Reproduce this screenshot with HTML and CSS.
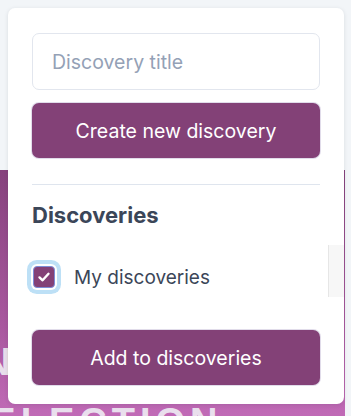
FILE: index.html
```html
<!DOCTYPE html>
<html lang="en">
<head>
    <meta charset="UTF-8">
    <meta name="viewport" content="width=device-width, initial-scale=1.0">
    <title>Discoveries</title>
    <link rel="stylesheet" href="styles.css">
</head>
<body>
    <div class="hero">
        <div class="hero-line first">DESIGN</div>
        <div class="hero-line second">SELECTION</div>
    </div>

    <div class="popover">
        <input type="text" class="title-input" placeholder="Discovery title">
        <button type="button" class="btn">Create new discovery</button>

        <hr class="divider">

        <h2 class="section-title">Discoveries</h2>

        <div class="list-wrap">
            <div class="list">
                <label class="check-row">
                    <span class="check-box">
                        <svg width="14" height="14" viewBox="0 0 14 14">
                            <path d="M2.5 7.4 L5.6 10.3 L11.5 3.8" fill="none" stroke="#fff" stroke-width="2.4" stroke-linecap="round" stroke-linejoin="round"/>
                        </svg>
                    </span>
                    <span class="check-label">My discoveries</span>
                </label>
            </div>
            <div class="scroll-track"></div>
        </div>

        <button type="button" class="btn add-btn">Add to discoveries</button>
    </div>
</body>
</html>
```

FILE: styles.css
```css
body {
    margin: 0;
    background: #f2f5f8;
    font-family: Inter, "Noto Sans", sans-serif;
    overflow: hidden;
}

.hero {
    margin-top: 170px;
    width: 345px;
    height: 260px;
    background: linear-gradient(180deg, #86427d 0%, #a9589f 60%, #c46dba 100%);
    overflow: hidden;
}

.hero-line {
    color: rgba(240, 240, 245, 0.9);
    font-family: "Liberation Sans", sans-serif;
    font-weight: bold;
    font-size: 38px;
    letter-spacing: 5px;
    line-height: 1;
    white-space: nowrap;
}

.hero-line.first {
    margin-top: 173px;
    margin-left: -160px;
}

.hero-line.second {
    margin-top: 22px;
    margin-left: -40px;
}

.popover {
    position: absolute;
    top: 8px;
    left: 8px;
    width: 336px;
    height: 396px;
    box-sizing: border-box;
    padding: 25px 24px 19px 24px;
    background: #fff;
    border-radius: 7px;
    box-shadow: 0 1px 4px rgba(30, 41, 59, 0.12);
    display: flex;
    flex-direction: column;
}

.title-input {
    height: 57px;
    box-sizing: border-box;
    border: 1px solid #e2e6ee;
    border-radius: 7px;
    padding: 0 19px;
    font-family: Inter, "Noto Sans", sans-serif;
    font-size: 19.5px;
    color: #334155;
    outline: none;
}

.title-input::placeholder {
    color: #94a1b6;
}

.btn {
    margin-top: 13px;
    height: 55px;
    border: none;
    border-radius: 7px;
    background: #834177;
    color: #fff;
    font-family: Inter, "Noto Sans", sans-serif;
    font-size: 19.5px;
    box-shadow: 0 0 0 1px #e1dcea;
    cursor: pointer;
}

.divider {
    margin: 26px 0 0 0;
    border: none;
    border-top: 1px solid #dfe5ee;
}

.section-title {
    margin: 17px 0 0 0;
    font-size: 22px;
    line-height: 27px;
    font-weight: 700;
    color: #3b4658;
}

.list-wrap {
    display: flex;
    margin-top: 16px;
    margin-right: -24px;
    height: 52px;
}

.list {
    flex: 1;
    display: flex;
    align-items: center;
    padding-top: 12px;
}

.scroll-track {
    width: 15px;
    background: #f7f7f7;
    border-left: 1px solid #e6e6e6;
}

.check-row {
    display: flex;
    align-items: center;
    gap: 19px;
    margin-left: 1px;
    cursor: pointer;
}

.check-box {
    width: 22px;
    height: 22px;
    box-sizing: border-box;
    border-radius: 4px;
    background: #834177;
    border: 1px solid #7d8cd6;
    box-shadow: 0 0 0 2px #fff, 0 0 0 6px #bde0f6;
    display: flex;
    align-items: center;
    justify-content: center;
}

.check-label {
    font-size: 19px;
    color: #3b4658;
}

.add-btn {
    margin-top: auto;
}
```
